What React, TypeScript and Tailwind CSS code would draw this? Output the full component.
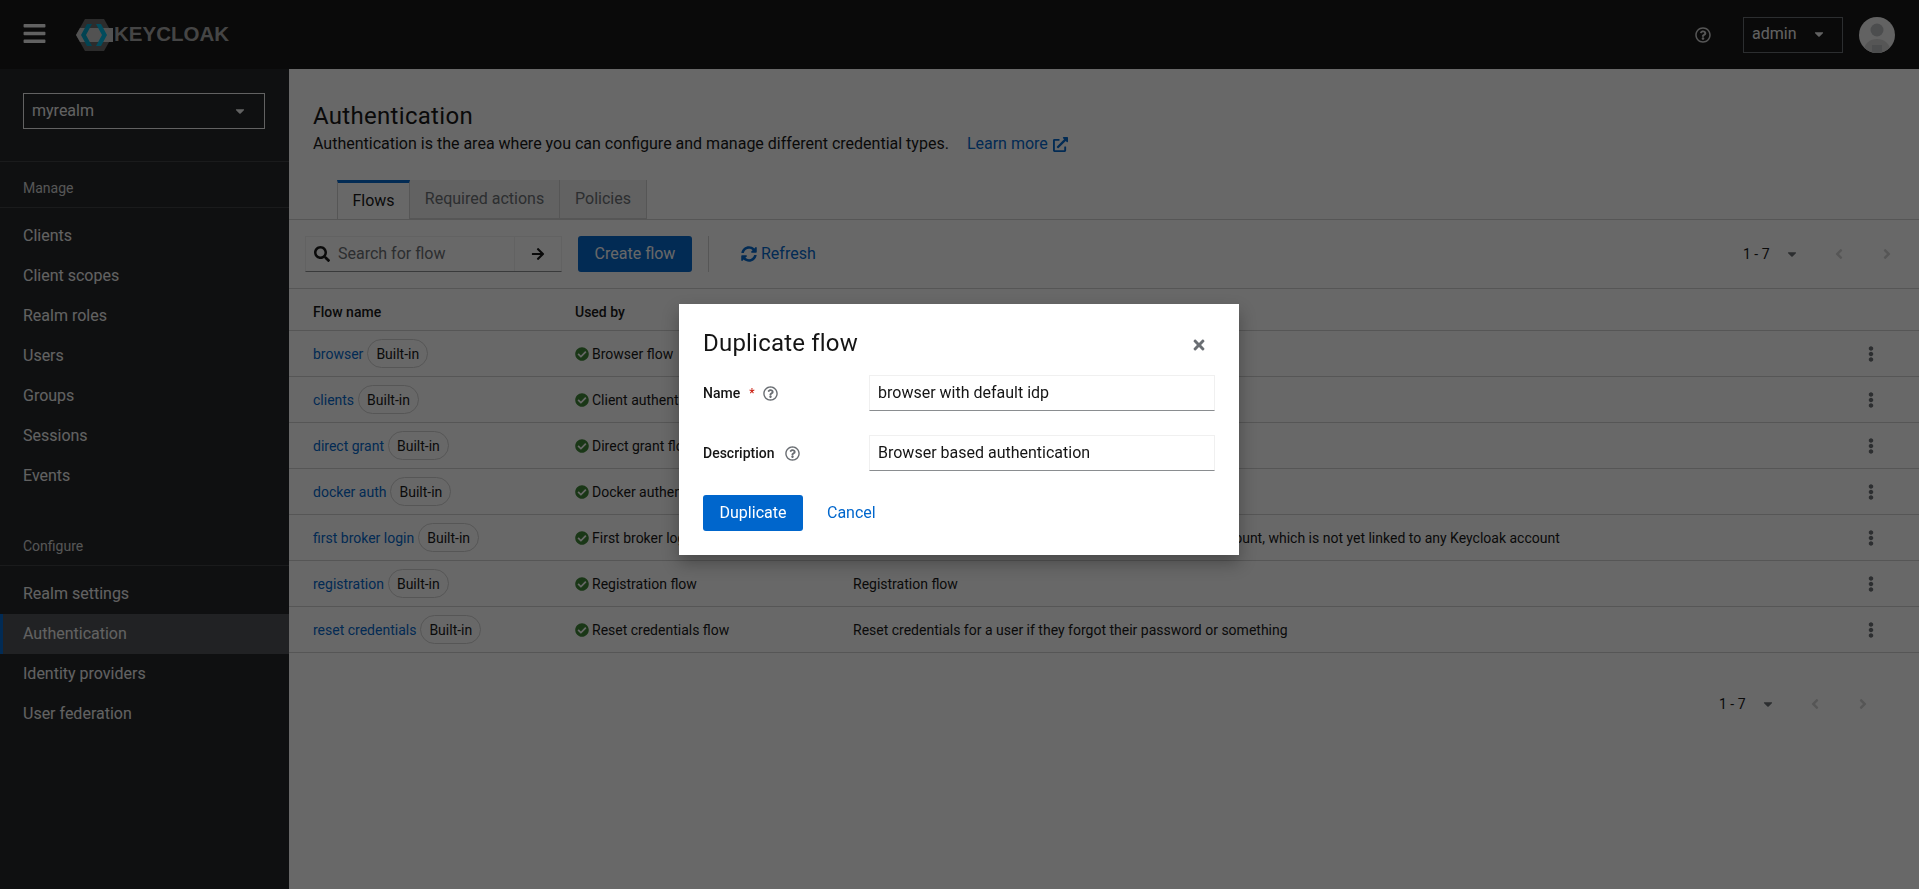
import type { ReactNode } from "react";
import {
  FaAngleLeft,
  FaAngleRight,
  FaArrowRight,
  FaBars,
  FaCaretDown,
  FaCheckCircle,
  FaEllipsisV,
  FaExternalLinkAlt,
  FaRegQuestionCircle,
  FaSearch,
  FaSyncAlt,
  FaTimes,
} from "react-icons/fa";

const MANAGE = ["Clients", "Client scopes", "Realm roles", "Users", "Groups", "Sessions", "Events"];
const CONFIGURE = ["Realm settings", "Authentication", "Identity providers", "User federation"];

const FLOWS = [
  { name: "browser", usedBy: "Browser flow", description: "Browser based authentication" },
  { name: "clients", usedBy: "Client authentication flow", description: "Base authentication for clients" },
  { name: "direct grant", usedBy: "Direct grant flow", description: "OpenID Connect Resource Owner Grant" },
  { name: "docker auth", usedBy: "Docker authentication flow", description: "Used by Docker clients to authenticate against the IDP" },
  {
    name: "first broker login",
    usedBy: "First broker login flow",
    description:
      "Actions taken after first broker login with identity provider account, which is not yet linked to any Keycloak account",
  },
  { name: "registration", usedBy: "Registration flow", description: "Registration flow" },
  { name: "reset credentials", usedBy: "Reset credentials flow", description: "Reset credentials for a user if they forgot their password or something" },
];

function Logo() {
  return (
    <div className="flex items-center">
      <svg width="38" height="32" viewBox="0 0 38 32" aria-hidden>
        <path d="M0 16 9 0h19l9 16-9 16H9z" fill="#6a6a6a" />
        <path d="M0 16 4 9h33v14H4z" fill="#c8c8c8" />
        <path d="M11 5 5 16l6 11h5l-6-11 6-11z" fill="#00a3c9" />
        <path d="M25 5l6 11-6 11h-5l6-11-6-11z" fill="#00b8e3" />
      </svg>
      <span className="text-[20.5px] leading-none font-bold text-[#a8a8a8] font-['Liberation_Sans',sans-serif]">
        KEYCLOAK
      </span>
    </div>
  );
}

function Avatar() {
  return (
    <svg width="36" height="36" viewBox="0 0 36 36" aria-hidden>
      <defs>
        <clipPath id="avatar-clip">
          <circle cx="18" cy="18" r="18" />
        </clipPath>
      </defs>
      <g clipPath="url(#avatar-clip)">
        <rect width="36" height="36" fill="#f0f0f0" />
        <circle cx="18" cy="13" r="6.5" fill="#b8bbbe" />
        <ellipse cx="18" cy="33" rx="13" ry="11" fill="#d2d2d2" />
        <rect x="13" y="28" width="10" height="8" fill="#b8bbbe" />
      </g>
    </svg>
  );
}

function NavSection({ title, items }: { title: string; items: string[] }) {
  return (
    <div>
      <div className="flex h-[46px] items-end border-b border-[#3c3f42] px-[23px] pb-[9px] text-sm text-[#d2d2d2]">
        {title}
      </div>
      <ul className="pt-2">
        {items.map((item) => {
          const active = item === "Authentication";
          return (
            <li
              key={item}
              className={
                active
                  ? "flex h-10 items-center border-l-[3px] border-[#06c] bg-[#4f5255] pl-5 text-[#f0f0f0]"
                  : "flex h-10 items-center pl-[23px] text-[#f0f0f0]"
              }
            >
              {item}
            </li>
          );
        })}
      </ul>
    </div>
  );
}

function Sidebar() {
  return (
    <aside className="w-[289px] shrink-0 bg-[#212427]">
      <div className="border-b border-[#3c3f42] pt-6 pb-8 pl-[23px]">
        <div className="flex h-[36px] w-[242px] items-center justify-between border border-[#f0f0f0] pr-[17px] pl-2 text-[#f0f0f0]">
          myrealm
          <FaCaretDown size={14} className="text-[#f0f0f0]" aria-hidden />
        </div>
      </div>
      <NavSection title="Manage" items={MANAGE} />
      <div className="h-6" />
      <NavSection title="Configure" items={CONFIGURE} />
    </aside>
  );
}

function Pagination({ className }: { className: string }) {
  return (
    <div className={`flex items-center text-sm text-[#151515] ${className}`}>
      <span className="w-[26px] whitespace-nowrap">1 - 7</span>
      <FaCaretDown size={14} className="ml-[16px] text-[#6a6e73]" aria-hidden />
      <FaAngleLeft size={16} className="ml-[32px] text-[#d2d2d2]" aria-hidden />
      <FaAngleRight size={16} className="ml-[32px] text-[#d2d2d2]" aria-hidden />
    </div>
  );
}

function Tab({ label, active, width }: { label: string; active?: boolean; width: string }) {
  return (
    <div
      className={
        active
          ? `flex h-[39px] items-center justify-center border-t-[3px] border-r border-l border-t-[#06c] border-r-[#d2d2d2] border-l-[#d2d2d2] bg-white pb-px text-[#151515] ${width}`
          : `flex h-[39px] items-center justify-center border-r border-b border-[#d2d2d2] bg-[#f0f0f0] text-[#6a6e73] ${width}`
      }
    >
      {label}
    </div>
  );
}

function Chip({ children }: { children: ReactNode }) {
  return (
    <span className="ml-1 inline-flex h-[29px] items-center rounded-full border border-[#d2d2d2] px-2 whitespace-nowrap text-[#151515]">
      {children}
    </span>
  );
}

function FlowsTable() {
  return (
    <div className="text-sm">
      <div className="flex h-[42px] items-center border-b border-[#d2d2d2] pt-1 pl-6 font-medium text-[#151515]">
        <div className="w-[262px]">Flow name</div>
        <div className="w-[278px]">Used by</div>
        <div>Description</div>
      </div>
      {FLOWS.map((flow) => (
        <div key={flow.name} className="flex h-[46px] items-center border-b border-[#d2d2d2] pl-6 text-[#151515]">
          <div className="flex w-[262px] items-center">
            <span className="text-[#06c]">{flow.name}</span>
            <Chip>Built-in</Chip>
          </div>
          <div className="flex w-[278px] items-center gap-[3px]">
            <FaCheckCircle size={14} className="text-[#3e8635]" aria-hidden />
            {flow.usedBy}
          </div>
          <div className="flex-1">{flow.description}</div>
          <FaEllipsisV size={16} className="mr-[40px] text-[#6a6e73]" aria-hidden />
        </div>
      ))}
    </div>
  );
}

function Field({ label, value, required }: { label: string; value: string; required?: boolean }) {
  return (
    <div className="flex items-center">
      <div className="flex w-[166px] items-center text-sm font-medium text-[#151515]">
        {label}
        {required && <span className="ml-[9px] text-xs text-[#c9190b]">*</span>}
        <FaRegQuestionCircle size={15} className={required ? "ml-[8px] text-[#6a6e73]" : "ml-[10px] text-[#6a6e73]"} aria-hidden />
      </div>
      <div className="flex h-9 w-[346px] items-center border border-b-[#8a8d90] border-[#f0f0f0] px-2 text-[#151515]">
        {value}
      </div>
    </div>
  );
}

function DuplicateDialog() {
  return (
    <div className="fixed inset-0 flex items-center justify-center bg-[#030303]/60 pr-px pb-[30px]">
      <div className="w-[560px] bg-white p-6 shadow-[0_8px_16px_rgba(3,3,3,0.3)]">
        <div className="flex items-center justify-between">
          <h2 className="text-2xl leading-[30px] tracking-[0.2px] text-[#151515]">Duplicate flow</h2>
          <FaTimes size={16} className="mt-1 mr-[8px] text-[#6a6e73]" aria-hidden />
        </div>
        <div className="mt-[17px] flex flex-col gap-6">
          <Field label="Name" value="browser with default idp" required />
          <Field label="Description" value="Browser based authentication" />
        </div>
        <div className="mt-6 flex items-center">
          <button className="h-9 w-[100px] rounded-[3px] bg-[#06c] text-white">Duplicate</button>
          <button className="ml-2 h-9 px-4 text-[#06c]">Cancel</button>
        </div>
      </div>
    </div>
  );
}

export default function App() {
  return (
    <div className="relative flex h-screen flex-col overflow-hidden bg-white font-['Roboto',sans-serif]">
      <header className="flex h-[69px] shrink-0 items-center bg-[#151515] pl-6">
        <FaBars size={25} className="-mt-[2px] -ml-[2px] text-[#f0f0f0]" aria-hidden />
        <div className="ml-[29px]">
          <Logo />
        </div>
        <div className="ml-auto flex items-center">
          <FaRegQuestionCircle size={16} className="text-[#d2d2d2]" aria-hidden />
          <div className="ml-[32px] flex h-9 w-[100px] items-center border border-[#6a6e73] pb-px pl-2 text-[#f0f0f0]">
            admin
            <FaCaretDown size={14} className="ml-[16px]" aria-hidden />
          </div>
          <div className="mr-6 ml-4">
            <Avatar />
          </div>
        </div>
      </header>

      <div className="flex min-h-0 flex-1">
        <Sidebar />
        <main className="min-w-0 flex-1">
          <div className="px-6 pt-8">
            <h1 className="text-2xl leading-[31px] tracking-[0.3px] text-[#151515]">Authentication</h1>
            <div className="flex items-center text-[#151515]">
              Authentication is the area where you can configure and manage different credential types.
              <span className="ml-[18px] flex items-center gap-[5px] text-[#06c]">
                Learn more
                <FaExternalLinkAlt size={15} aria-hidden />
              </span>
            </div>
          </div>

          <div className="mt-6 flex border-b border-[#d2d2d2] pl-[48px]">
            <Tab label="Flows" active width="w-[73px]" />
            <Tab label="Required actions" width="w-[150px]" />
            <Tab label="Policies" width="w-[87px]" />
          </div>

          <div className="flex h-[69px] items-center border-b border-[#d2d2d2] pl-4">
            <div className="flex h-9 w-[257px] border border-b-[#8a8d90] border-[#f0f0f0]">
              <div className="flex flex-1 items-center pl-2 text-[#6a6e73]">
                <FaSearch size={16} className="text-[#151515]" aria-hidden />
                <span className="ml-2">Search for flow</span>
              </div>
              <div className="flex w-[47px] items-center justify-center border-l border-[#f0f0f0]">
                <FaArrowRight size={14} className="text-[#151515]" aria-hidden />
              </div>
            </div>
            <button className="ml-4 h-9 w-[114px] rounded-[3px] bg-[#06c] text-white">Create flow</button>
            <div className="ml-4 h-9 w-px bg-[#d2d2d2]" />
            <div className="ml-8 flex items-center gap-[4px] text-[#06c]">
              <FaSyncAlt size={16} aria-hidden />
              Refresh
            </div>
            <Pagination className="ml-auto pr-6" />
          </div>

          <FlowsTable />
          <Pagination className="mt-[41px] justify-end pr-[48px]" />
        </main>
      </div>

      <DuplicateDialog />
    </div>
  );
}
